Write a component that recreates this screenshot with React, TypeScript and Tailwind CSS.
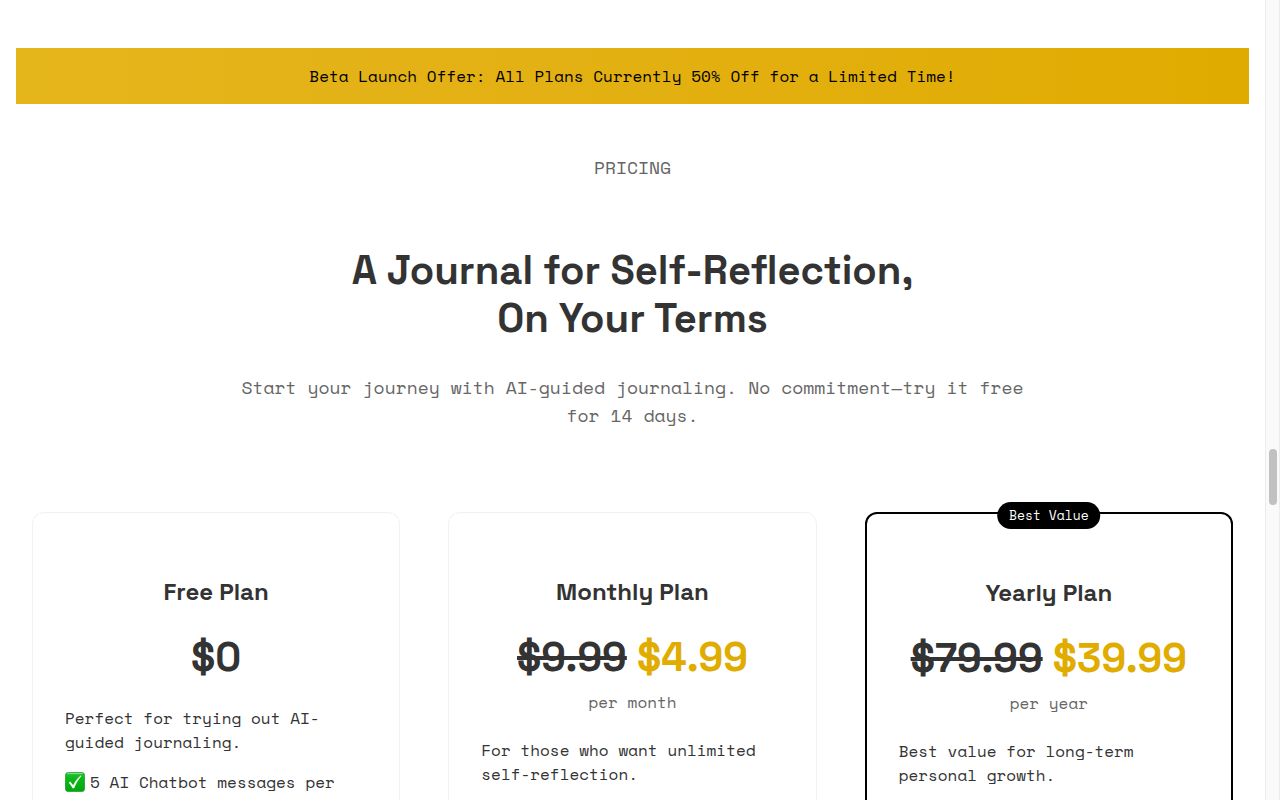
type Plan = {
  name: string;
  price: string;
  oldPrice?: string;
  period?: string;
  description: string;
  features: string[];
  badge?: string;
};

const PLANS: Plan[] = [
  {
    name: "Free Plan",
    price: "$0",
    description: "Perfect for trying out AI-guided journaling.",
    features: ["5 AI Chatbot messages per"],
  },
  {
    name: "Monthly Plan",
    price: "$4.99",
    oldPrice: "$9.99",
    period: "per month",
    description: "For those who want unlimited self-reflection.",
    features: [],
  },
  {
    name: "Yearly Plan",
    price: "$39.99",
    oldPrice: "$79.99",
    period: "per year",
    description: "Best value for long-term personal growth.",
    features: [],
    badge: "Best Value",
  },
];

function CheckIcon() {
  return (
    <svg viewBox="0 0 20 20" className="h-5 w-5 shrink-0" aria-hidden="true">
      <defs>
        <linearGradient id="check-bg" x1="0" y1="0" x2="0" y2="1">
          <stop offset="0" stopColor="#2fc23a" />
          <stop offset="0.3" stopColor="#0db81a" />
          <stop offset="1" stopColor="#00a80c" />
        </linearGradient>
      </defs>
      <rect x="0.4" y="0.4" width="19.2" height="19.2" rx="3.2" fill="url(#check-bg)" stroke="#1c9a2a" strokeWidth="0.8" />
      <path d="M2.6 1.6h14.8" stroke="#8be592" strokeWidth="0.9" strokeLinecap="round" />
      <path d="M3.7 10.7L5.2 9.6L8.2 13.2C10 9.6 12.4 6.2 15.6 3.5L16.4 4.1C13.4 7.6 11 11.5 9.2 16.3H7.6C6.5 14.1 5.3 12.3 3.7 10.7Z" fill="#fff" />
    </svg>
  );
}

function PlanCard({ plan }: { plan: Plan }) {
  return (
    <article
      className={`relative rounded-xl bg-white px-8 pt-16 pb-8 ${
        plan.badge ? "border-2 border-black" : "border border-[#f2f2f2]"
      }`}
    >
      {plan.badge && (
        <span className="absolute -top-3 left-1/2 -translate-x-1/2 rounded-full bg-black px-3 py-1 text-[13px] leading-[19px] whitespace-nowrap text-white">
          {plan.badge}
        </span>
      )}
      <h3 className="text-center font-['Space_Grotesk','Inter',sans-serif] text-2xl leading-[29px] font-bold">
        {plan.name}
      </h3>
      <div className="mt-7 text-center font-['Space_Grotesk','Inter',sans-serif] text-[40px] leading-[48px] font-bold whitespace-nowrap">
        {plan.oldPrice && (
          <>
            <del>{plan.oldPrice}</del>{" "}
          </>
        )}
        <span className={plan.oldPrice ? "text-[#e0ac00]" : ""}>{plan.price}</span>
      </div>
      {plan.period && <p className="mt-2 text-center text-[#666]">{plan.period}</p>}
      <p className="mt-6">{plan.description}</p>
      <ul className="mt-4">
        {plan.features.map((feature) => (
          <li key={feature} className="flex items-center gap-[5px] whitespace-nowrap">
            <CheckIcon />
            {feature}
          </li>
        ))}
      </ul>
    </article>
  );
}

export default function App() {
  return (
    <div className="flex h-screen overflow-hidden bg-white font-['Space_Mono','Liberation_Mono',monospace] text-base text-[#333]">
      <main className="min-w-0 flex-1 px-4 pt-12">
        <div className="bg-linear-to-r from-[#e5b51c] to-[#e0ab00] p-4 text-center text-black">
          Beta Launch Offer: All Plans Currently 50% Off for a Limited Time!
        </div>

        <section className="px-4">
          <header className="flex flex-col items-center pt-[49px] text-center">
            <p className="text-lg leading-7 text-[#666]">PRICING</p>
            <h2 className="mt-[66px] font-['Space_Grotesk','Inter',sans-serif] text-[40px] leading-[48px] font-bold">
              A Journal for Self-Reflection,
              <br />
              On Your Terms
            </h2>
            <p className="mt-[30px] max-w-[800px] text-lg leading-7 text-[#666]">
              Start your journey with AI-guided journaling. No commitment—try it free for 14 days.
            </p>
          </header>

          <div className="mt-[83px] grid grid-cols-3 gap-12">
            {PLANS.map((plan) => (
              <PlanCard key={plan.name} plan={plan} />
            ))}
          </div>
        </section>
      </main>

      {/* scroll track */}
      <aside className="flex w-[15px] flex-col items-center border-x border-[#ececec] bg-[#fafafa] pt-[449px]">
        <div className="h-14 w-2 rounded-full bg-[#c1c1c1]" />
      </aside>
    </div>
  );
}
